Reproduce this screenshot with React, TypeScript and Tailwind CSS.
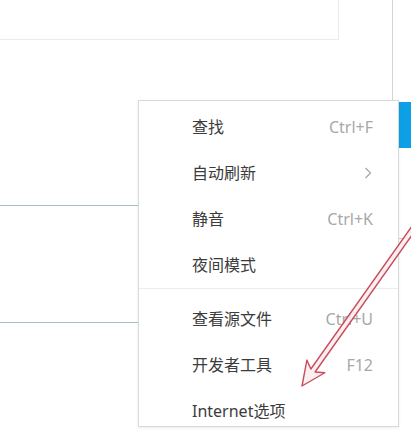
import React from 'react';

type Item = { label: string; hint?: string; sub?: boolean };

const groupA: Item[] = [
  { label: '查找', hint: 'Ctrl+F' },
  { label: '自动刷新', sub: true },
  { label: '静音', hint: 'Ctrl+K' },
  { label: '夜间模式' },
];

const groupB: Item[] = [
  { label: '查看源文件', hint: 'Ctrl+U' },
  { label: '开发者工具', hint: 'F12' },
  { label: 'Internet选项' },
];

const MenuRow = ({ item }: { item: Item }) => (
  <div className="flex h-[46px] items-center justify-between pl-[53px] pr-[25px]">
    <span className="text-[16px] text-[#3c3c3c]">{item.label}</span>
    {item.hint && <span className="text-[16px] text-[#a8a8a8]">{item.hint}</span>}
    {item.sub && (
      <svg width="8" height="12" viewBox="0 0 8 12" className="mr-[1px]">
        <path d="M1.5 1 L6.5 6 L1.5 11" fill="none" stroke="#a8a8a8" strokeWidth="1.3" />
      </svg>
    )}
  </div>
);

export default function App() {
  return (
    <div
      className="relative h-[439px] w-[411px] overflow-hidden bg-white"
      style={{ fontFamily: '"Noto Sans", "Noto Sans CJK SC", sans-serif' }}
    >
      {/* page behind the menu */}
      <div className="flex h-full">
        <div className="flex w-[398px] flex-col">
          <div className="h-[100px] w-[393px] border-r border-[#d4d4d4]">
            <div className="h-[40px] w-[339px] border-r border-b border-[#ebebeb]" />
          </div>
          <div className="mt-[105px] border-t-[1.5px] border-[#a9bec7]" />
          <div className="mt-[116px] border-t-[1.5px] border-[#a9bec7]" />
        </div>
        <div className="flex flex-1 flex-col">
          <div className="mt-[102px] h-[46px] bg-[#0ea0e6]" />
          <div className="mt-[90px] border-t border-[#cfcfcf]" />
        </div>
      </div>

      {/* context menu */}
      <div className="absolute left-[138px] top-[100px] h-[327px] w-[261px] overflow-hidden border border-[#d9d9d9] bg-white pt-[3px] shadow-[0_1px_3px_rgba(0,0,0,0.08)]">
        {groupA.map((it) => (
          <MenuRow key={it.label} item={it} />
        ))}
        <div className="border-t border-[#ececec]" />
        <div className="pt-[7px]">
          {groupB.map((it) => (
            <MenuRow key={it.label} item={it} />
          ))}
        </div>
      </div>

      {/* red annotation arrow */}
      <svg className="pointer-events-none absolute inset-0" width="411" height="439">
        <g transform="translate(302 386) rotate(125.3)">
          <polygon
            points="0,0 -24,-11 -19,-2.6 -240,-2.6 -240,2.6 -19,2.6 -24,11"
            fill="#fbecee"
            fillOpacity="0.85"
            stroke="#c94c5c"
            strokeWidth="1.4"
            strokeLinejoin="round"
          />
        </g>
      </svg>
    </div>
  );
}
